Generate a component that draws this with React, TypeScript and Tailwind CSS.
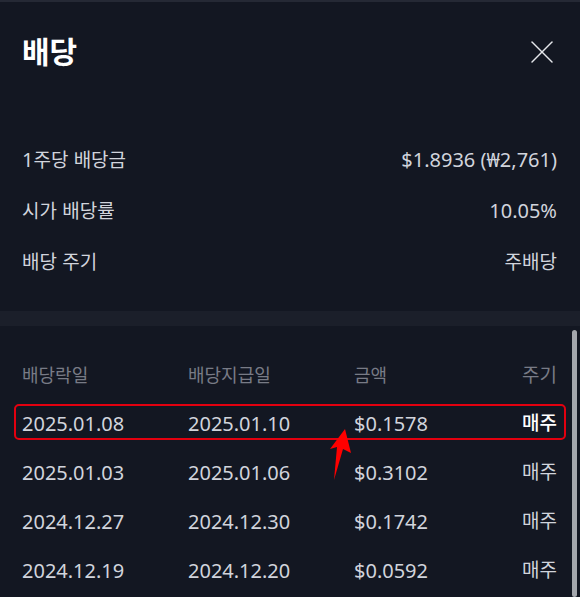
import React from "react";

// ============================================================================
// Data
// ============================================================================

const summary = [
  { label: "1주당 배당금", value: "$1.8936 (₩2,761)" },
  { label: "시가 배당률", value: "10.05%" },
  { label: "배당 주기", value: "주배당" },
];

const history = [
  { ex: "2025.01.08", pay: "2025.01.10", amount: "$0.1578", cycle: "매주" },
  { ex: "2025.01.03", pay: "2025.01.06", amount: "$0.3102", cycle: "매주" },
  { ex: "2024.12.27", pay: "2024.12.30", amount: "$0.1742", cycle: "매주" },
  { ex: "2024.12.19", pay: "2024.12.20", amount: "$0.0592", cycle: "매주" },
];

// Hangul runs sit a touch smaller than the Latin digits in this UI
const T: React.FC<{ t: string }> = ({ t }) => (
  <>
    {t.split(/([\uac00-\ud7a3]+)/).map((p, i) =>
      /[\uac00-\ud7a3]/.test(p) ? (
        <span key={i} className="text-[19px]">
          {p}
        </span>
      ) : (
        <React.Fragment key={i}>{p}</React.Fragment>
      )
    )}
  </>
);

// ============================================================================
// App
// ============================================================================

const App: React.FC = () => {
  return (
    <div
      className="relative w-[580px] h-[597px] overflow-hidden bg-[#131722] text-[#d1d4dc]"
      style={{ fontFamily: '"Noto Sans", "Noto Sans CJK KR", sans-serif' }}
    >
      {/* top edge */}
      <div className="h-[2px] bg-[#252935]"></div>

      {/* Header */}
      <div className="flex items-center justify-between h-[100px] pl-[22px] pr-[25px]">
        <h1 className="text-[30px] font-bold text-white leading-none">배당</h1>
        <button className="w-[26px] h-[26px] flex items-center justify-center text-[#e5e7eb]">
          <svg width="24" height="24" viewBox="0 0 24 24" fill="none" stroke="currentColor" strokeWidth="1.5" strokeLinecap="round">
            <path d="M2 2 L22 22" />
            <path d="M22 2 L2 22" />
          </svg>
        </button>
      </div>

      {/* Summary */}
      <div className="mt-[32px] mb-[24px] pl-[22px] pr-[23px]">
        {summary.map((row) => (
          <div key={row.label} className="flex items-center justify-between h-[51px] text-[20px]">
            <span><T t={row.label} /></span>
            <span><T t={row.value} /></span>
          </div>
        ))}
      </div>

      {/* Divider band */}
      <div className="h-[15px] bg-[#1b1f2a]"></div>

      {/* History table */}
      <div className="pt-[26px]">
        <div className="grid grid-cols-[166px_166px_1fr_auto] items-center h-[47px] pl-[22px] pr-[23px] text-[18px] text-[#787b86]">
          <span>배당락일</span>
          <span>배당지급일</span>
          <span>금액</span>
          <span className="text-[19px]">주기</span>
        </div>
        {history.map((row, i) => (
          <div
            key={row.ex}
            className="relative grid grid-cols-[166px_166px_1fr_auto] items-center h-[49px] pl-[22px] pr-[23px] text-[20px]"
          >
            {i === 0 && (
              <div className="absolute left-[14px] right-[14px] top-[5px] bottom-[8px] border-2 border-[#e3000f] rounded-[5px]"></div>
            )}
            <span>{row.ex}</span>
            <span>{row.pay}</span>
            <span>{row.amount}</span>
            <span className={i === 0 ? "text-[19px] text-white font-medium" : "text-[19px]"}>{row.cycle}</span>
          </div>
        ))}
      </div>

      {/* Annotation arrow */}
      <svg className="absolute left-[320px] top-[420px]" width="40" height="65" viewBox="320 420 40 65">
        <polygon points="345,429 351,453 343,449 334,480 337,447 330,449" fill="#ff0000" />
      </svg>

      {/* Scrollbar */}
      <div className="absolute right-[3px] top-[330px] bottom-0 w-[5px] rounded-full bg-[#a4a7ad]"></div>
    </div>
  );
};

export default App;
